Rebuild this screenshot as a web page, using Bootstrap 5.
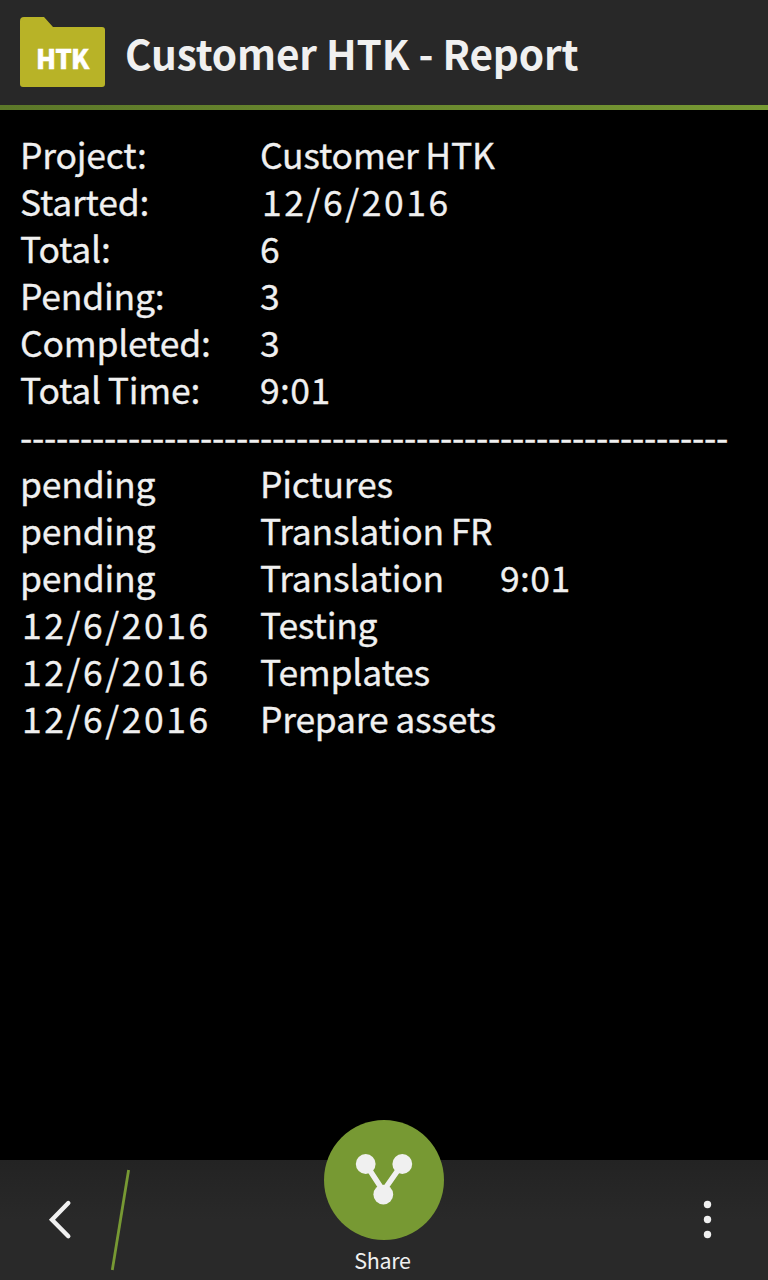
<!DOCTYPE html>
<html lang="en" data-bs-theme="dark">
<head>
<meta charset="utf-8">
<meta name="viewport" content="width=device-width, initial-scale=1">
<title>Customer HTK - Report</title>
<link href="https://cdn.jsdelivr.net/npm/bootstrap@5.3.0/dist/css/bootstrap.min.css" rel="stylesheet">
<style>
  body { background: #000; color: #f0f0f0; font-family: "Noto Sans CJK SC", "Noto Sans", sans-serif; }
  .title-bar { height: 110px; background: #282828; padding-left: 20px; }
  .title-bar::after { content: ""; position: absolute; inset: auto 0 0 0; height: 5px; background: linear-gradient(90deg, #5c7829, #779933); }
  .title-bar h1 { font-size: 40.5px; line-height: 60px; font-weight: 700; letter-spacing: -.12px; color: #f0f0f0; margin: 0 0 4px 20px; }
  .folder-icon { width: 85px; height: 70px; margin-bottom: 6px; }
  .report { padding: 20px 20px 0; font-size: 35.5px; line-height: 47px; letter-spacing: -.22px; word-spacing: -1px; -webkit-text-stroke: .3px #f0f0f0; }
  .report-row { display: grid; grid-template-columns: 240px 240px 1fr; white-space: nowrap; height: 47px; }
  .report-row .date { letter-spacing: 2.55px; padding-left: 2px; }
  .report-row .time { letter-spacing: .4px; }
  .rule-line { height: 47px; letter-spacing: -.318px; white-space: nowrap; }
  .action-bar { height: 120px; background: linear-gradient(#232323, #292929 50%); }
  .action-bar button { background: none; border: 0; padding: 0; color: #f0f0f0; }
  .share-action { width: 120px; height: 160px; margin-top: -40px; }
  .share-disc { width: 120px; height: 120px; background: #779933; }
  .share-label { font-size: 21.5px; line-height: 40px; letter-spacing: -.3px; padding-right: 3px; }
</style>
</head>
<body>
<div class="vh-100 d-flex flex-column overflow-hidden">
  <header class="title-bar position-relative d-flex align-items-center flex-shrink-0">
    <svg class="folder-icon" viewBox="0 0 85 70" aria-hidden="true">
      <path fill="#b8b327" d="M4 0H24L33 10H82Q85 10 85 13V67Q85 70 82 70H3Q0 70 0 67V4Q0 0 4 0Z"/>
      <text x="42.3" y="52" text-anchor="middle" font-size="26" font-weight="900" letter-spacing="-.9" fill="#fff" stroke="#fff" stroke-width=".4">HTK</text>
    </svg>
    <h1>Customer HTK - Report</h1>
  </header>

  <main class="report flex-grow-1">
    <div class="report-row"><span>Project:</span><span>Customer HTK</span></div>
    <div class="report-row"><span>Started:</span><span class="date">12/6/2016</span></div>
    <div class="report-row"><span>Total:</span><span>6</span></div>
    <div class="report-row"><span>Pending:</span><span>3</span></div>
    <div class="report-row"><span>Completed:</span><span>3</span></div>
    <div class="report-row"><span>Total Time:</span><span class="time">9:01</span></div>
    <div class="rule-line">-----------------------------------------------------------</div>
    <div class="report-row"><span>pending</span><span>Pictures</span></div>
    <div class="report-row"><span>pending</span><span>Translation FR</span></div>
    <div class="report-row"><span>pending</span><span>Translation</span><span class="time">9:01</span></div>
    <div class="report-row"><span class="date">12/6/2016</span><span>Testing</span></div>
    <div class="report-row"><span class="date">12/6/2016</span><span>Templates</span></div>
    <div class="report-row"><span class="date">12/6/2016</span><span>Prepare assets</span></div>
  </main>

  <footer class="action-bar d-flex justify-content-between flex-shrink-0">
    <button type="button" class="d-flex" aria-label="Back">
      <svg width="324" height="120" viewBox="0 0 324 120" fill="none">
        <path d="M68.3 43L52 59.8L68.3 76.2" stroke="#f0f0f0" stroke-width="4.4" stroke-linecap="round"/>
        <path d="M128.6 10L112.3 110" stroke="#779933" stroke-width="2.8"/>
      </svg>
    </button>
    <button type="button" class="share-action d-flex flex-column align-items-center flex-shrink-0">
      <span class="share-disc rounded-circle d-block">
        <svg class="d-block" width="120" height="120" viewBox="0 0 120 120" fill="#f0f0f0">
          <path d="M41.7 44L59.3 71L78.3 44" fill="none" stroke="#f0f0f0" stroke-width="5.5"/>
          <circle cx="41.7" cy="44" r="9.9"/><circle cx="78.3" cy="44" r="9.9"/><circle cx="59.3" cy="74.6" r="9.9"/>
        </svg>
      </span>
      <span class="share-label">Share</span>
    </button>
    <button type="button" class="d-flex" aria-label="More actions">
      <svg width="324" height="120" viewBox="0 0 324 120" fill="#f0f0f0">
        <circle cx="263.5" cy="44.5" r="3.7"/><circle cx="263.5" cy="59.5" r="3.7"/><circle cx="263.5" cy="74.5" r="3.7"/>
      </svg>
    </button>
  </footer>
</div>
<script src="https://cdn.jsdelivr.net/npm/bootstrap@5.3.0/dist/js/bootstrap.bundle.min.js"></script>
</body>
</html>
